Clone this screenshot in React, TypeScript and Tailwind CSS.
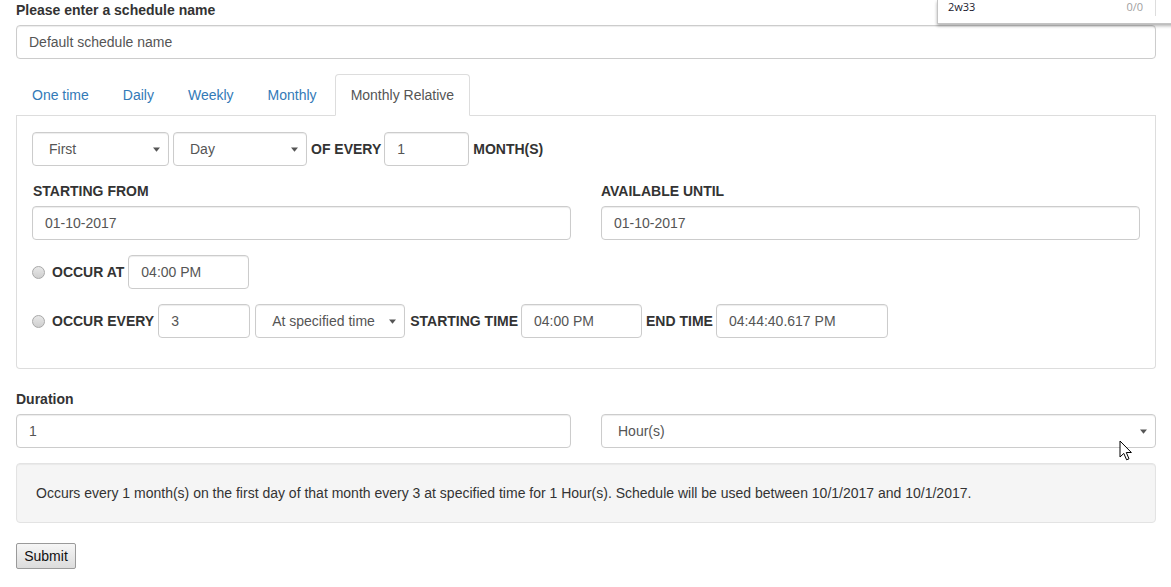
import React from "react";

const FONT = "font-['Liberation_Sans',Arial,sans-serif]";

const INPUT_CLASS =
  "flex h-[34px] items-center rounded-[4px] border border-[#ccc] bg-white px-[12px] text-[14px] text-[#555] shadow-[inset_0_1px_1px_rgba(0,0,0,0.075)]";

const LABEL_CLASS = "text-[14px] font-bold leading-[20px] text-[#333]";

function Caret() {
  return (
    <svg width="7" height="5" viewBox="0 0 7 5" className="shrink-0">
      <path d="M0 0.5 H7 L3.5 4.8 Z" fill="#555" />
    </svg>
  );
}

function Select({ value, width, className = "" }: { value: string; width?: string; className?: string }) {
  return (
    <div className={`${INPUT_CLASS} justify-between pl-[16px] pr-[8px] ${width ?? ""} ${className}`}>
      <span>{value}</span>
      <Caret />
    </div>
  );
}

function Field({ value, width }: { value: string; width: string }) {
  return <div className={`${INPUT_CLASS} ${width}`}>{value}</div>;
}

function Radio() {
  return (
    <span className="mr-[7px] inline-block h-[13px] w-[13px] shrink-0 rounded-full border border-[#a8a8a8] bg-gradient-to-b from-[#e8e8e8] to-[#cfcfcf]" />
  );
}

const TABS = ["One time", "Daily", "Weekly", "Monthly", "Monthly Relative"];

function Tabs() {
  return (
    <ul className="flex h-[42px] border-b border-[#ddd]">
      {TABS.map((tab, i) => {
        const active = i === TABS.length - 1;
        return (
          <li key={tab} className="mr-[2px] -mb-px">
            <div
              className={
                active
                  ? "rounded-t-[4px] border border-[#ddd] border-b-transparent bg-white px-[15px] py-[10px] leading-[20px] text-[#555]"
                  : "border border-transparent px-[15px] py-[10px] leading-[20px] text-[#337ab7]"
              }
            >
              {tab}
            </div>
          </li>
        );
      })}
    </ul>
  );
}

function Cursor() {
  return (
    <svg
      width="14"
      height="22"
      viewBox="0 0 14 22"
      className="absolute left-[1119px] top-[440px]"
    >
      <path
        d="M1 1 L1 17 L4.8 13.4 L7.6 19.8 L10 18.8 L7.3 12.5 L12.4 12.5 Z"
        fill="#fff"
        stroke="#000"
        strokeWidth="1"
        strokeLinejoin="miter"
      />
    </svg>
  );
}

function FindPopup() {
  return (
    <div className="absolute left-[937px] top-0 h-[24px] w-[260px] border-l border-b border-[#c4c4c4] bg-white shadow-[0_2px_3px_rgba(0,0,0,0.3)] font-['Open_Sans',Arial,sans-serif]">
      <div className="flex items-center pl-[10px] text-[11px] leading-[13px]">
        <span className="text-[#1a1a2e]">2w33</span>
        <span className="ml-auto mr-[54px] text-[#a0a0a0]">0/0</span>
      </div>
      <div className="absolute left-[217px] top-0 h-[16px] w-px bg-[#ddd]" />
    </div>
  );
}

export default function App() {
  return (
    <div className={`relative h-[587px] w-[1171px] overflow-hidden bg-white px-[16px] text-[14px] text-[#333] ${FONT}`}>
      <div className="w-[1140px]">
        <div className={LABEL_CLASS}>Please enter a schedule name</div>
        <Field value="Default schedule name" width="mt-[5px] w-full" />

        <div className="mt-[15px]">
          <Tabs />
          <div className="rounded-b-[4px] border border-t-0 border-[#ddd] px-[15px] pt-[16px] pb-[30px]">
            {/* Relative day row */}
            <div className="flex items-center">
              <Select value="First" width="w-[137px]" />
              <Select value="Day" width="ml-[4px] w-[134px]" />
              <span className={`${LABEL_CLASS} ml-[4px]`}>OF EVERY</span>
              <Field value="1" width="ml-[3px] w-[85px]" />
              <span className={`${LABEL_CLASS} ml-[4px]`}>MONTH(S)</span>
            </div>

            {/* Date range */}
            <div className="mt-[15px] grid grid-cols-2 gap-x-[30px]">
              <div>
                <div className={`${LABEL_CLASS} pl-px`}>STARTING FROM</div>
                <Field value="01-10-2017" width="mt-[5px] w-full" />
              </div>
              <div>
                <div className={LABEL_CLASS}>AVAILABLE UNTIL</div>
                <Field value="01-10-2017" width="mt-[5px] w-full" />
              </div>
            </div>

            {/* Occur at */}
            <div className="mt-[15px] flex items-center">
              <Radio />
              <span className={LABEL_CLASS}>OCCUR AT</span>
              <Field value="04:00 PM" width="ml-[4px] w-[121px]" />
            </div>

            {/* Occur every */}
            <div className="mt-[15px] flex items-center">
              <Radio />
              <span className={LABEL_CLASS}>OCCUR EVERY</span>
              <Field value="3" width="ml-[4px] w-[92px]" />
              <Select value="At specified time" width="ml-[5px] w-[150px]" />
              <span className={`${LABEL_CLASS} ml-[5px]`}>STARTING TIME</span>
              <Field value="04:00 PM" width="ml-[3px] w-[121px]" />
              <span className={`${LABEL_CLASS} ml-[4px]`}>END TIME</span>
              <Field value="04:44:40.617 PM" width="ml-[3px] w-[172px]" />
            </div>
          </div>
        </div>

        {/* Duration */}
        <div className={`${LABEL_CLASS} mt-[20px]`}>Duration</div>
        <div className="mt-[5px] grid grid-cols-2 gap-x-[30px]">
          <Field value="1" width="w-full" />
          <Select value="Hour(s)" width="w-full" />
        </div>

        {/* Summary */}
        <div className="mt-[15px] rounded-[4px] border border-[#e3e3e3] bg-[#f5f5f5] px-[19px] py-[19px] leading-[20px] text-[#333] shadow-[inset_0_1px_1px_rgba(0,0,0,0.05)]">
          Occurs every 1 month(s) on the first day of that month every 3 at specified time for 1 Hour(s). Schedule will be used between 10/1/2017 and 10/1/2017.
        </div>

        <button className="mt-[20px] flex h-[26px] w-[60px] items-center justify-center rounded-[2px] border border-[#9a9a9a] bg-gradient-to-b from-[#f6f6f6] to-[#dcdcdc] text-[14px] text-[#111]">
          Submit
        </button>
      </div>

      <FindPopup />
      <Cursor />
    </div>
  );
}
